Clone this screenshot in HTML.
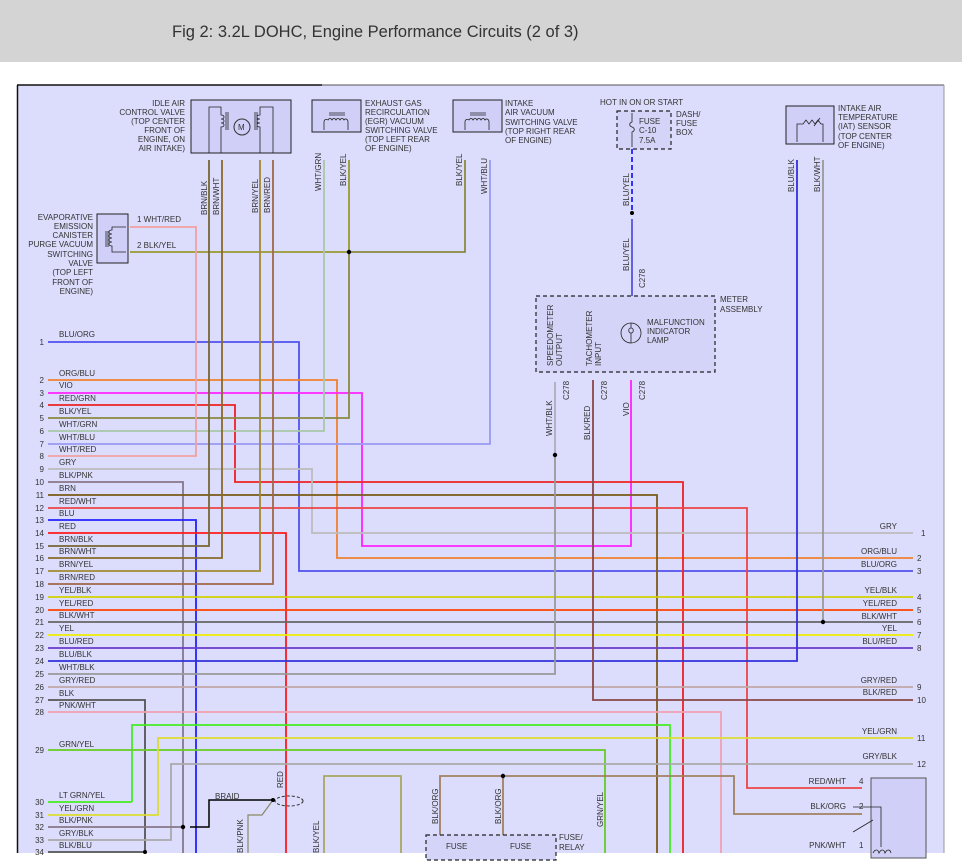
<!DOCTYPE html>
<html><head><meta charset="utf-8"><style>
html,body{margin:0;padding:0;width:962px;height:864px;overflow:hidden;background:#fff;font-family:"Liberation Sans",sans-serif}
#hdr{position:absolute;left:0;top:0;width:962px;height:62px;background:#d4d4d4}
#hdr span{position:absolute;left:172px;top:23px;font-size:16.5px;color:#333}
svg{position:absolute;left:0;top:0}
svg text{font-family:"Liberation Sans",sans-serif;font-size:8px;fill:#333}
</style></head><body>
<div id="hdr"><span>Fig 2: 3.2L DOHC, Engine Performance Circuits (2 of 3)</span></div>
<svg width="962" height="864" viewBox="0 0 962 864">
<rect x="17" y="85" width="927" height="768" fill="#dcdcfc"/>
<line x1="17" y1="85" x2="322" y2="85" stroke="#111" stroke-width="1.5"/>
<line x1="322" y1="85" x2="944" y2="85" stroke="#555" stroke-width="1"/>
<line x1="17.5" y1="85" x2="17.5" y2="853" stroke="#111" stroke-width="1.5"/>
<line x1="944" y1="85" x2="944" y2="853" stroke="#999" stroke-width="1"/>
<g fill="none" stroke-width="1.8">
<polyline points="48,342 299,342 299,571 913,571" stroke="#5050ee"/>
<polyline points="48,380 337,380 337,558 913,558" stroke="#f08030"/>
<polyline points="48,393 362,393 362,546 631,546 631,380" stroke="#ff22ff"/>
<polyline points="48,405 235,405 235,482 683,482 683,853" stroke="#ee2222"/>
<polyline points="48,418 349,418 349,252 465,252 465,160" stroke="#8a8a40"/>
<polyline points="130,252 349,252 349,160" stroke="#9a9a30"/>
<polyline points="48,431 324,431 324,160" stroke="#a8c8a8"/>
<polyline points="48,444 490,444 490,160" stroke="#9a9af0"/>
<polyline points="48,456 196,456 196,227 130,227" stroke="#f0a0a0"/>
<polyline points="48,469 312,469 312,533 913,533" stroke="#bcbcbc"/>
<polyline points="48,482 183,482 183,853" stroke="#887788"/>
<polyline points="48,495 657,495 657,853" stroke="#7a5a18"/>
<polyline points="48,508 747,508 747,788 862,788" stroke="#ee4444"/>
<polyline points="48,520 196,520 196,853" stroke="#2222ff"/>
<polyline points="48,533 286,533 286,853" stroke="#ff1a1a"/>
<polyline points="48,546 209,546 209,160" stroke="#776633"/>
<polyline points="48,558 222,558 222,160" stroke="#8a6a28"/>
<polyline points="48,571 260,571 260,160" stroke="#a08a30"/>
<polyline points="48,584 273,584 273,160" stroke="#a06848"/>
<polyline points="48,597 913,597" stroke="#d0d000"/>
<polyline points="48,610 913,610" stroke="#ff4400"/>
<polyline points="48,622 913,622" stroke="#666"/>
<polyline points="823,160 823,622" stroke="#999"/>
<polyline points="48,635 913,635" stroke="#eeee00"/>
<polyline points="48,648 913,648" stroke="#6a3acc"/>
<polyline points="48,661 797,661 797,160" stroke="#3030dd"/>
<polyline points="48,674 555,674 555,455" stroke="#999"/>
<polyline points="555,455 555,382" stroke="#888" stroke-width="1"/>
<polyline points="48,687 913,687" stroke="#c0a8a8"/>
<polyline points="48,700 145,700 145,853" stroke="#555"/>
<polyline points="593,380 593,700 913,700" stroke="#8a4848"/>
<polyline points="48,712 721,712 721,853" stroke="#f0a0b0"/>
<polyline points="132,802 132,725 670,725 670,853" stroke="#44ee22"/>
<polyline points="48,802 132,802" stroke="#44ee22"/>
<polyline points="48,750 605,750 605,853" stroke="#66cc22"/>
<polyline points="48,815 158,815 158,738 913,738" stroke="#dddd33"/>
<polyline points="48,840 171,840 171,764 913,764" stroke="#aaa"/>
<polyline points="48,827 183,827" stroke="#887788"/>
<polyline points="48,852 145,852" stroke="#555"/>
<polyline points="440,853 440,776 734,776 734,814 862,814" stroke="#a08060"/>
<polyline points="503,776 503,853" stroke="#a08060"/>
<polyline points="324,853 324,776 401,776 401,853" stroke="#a8a860"/>
<polyline points="632,219 632,296" stroke="#5555dd"/>
<polyline points="632,149 632,213" stroke="#2222ff" stroke-dasharray="5,3"/>
<polyline points="632,372 632,296" stroke="#333" stroke-width="1"/>
</g>
<polyline points="190,827 209,827 209,800 273,800" fill="none" stroke="#000" stroke-width="1.5"/>
<polyline points="248,853 248,815 262,815 273,800" fill="none" stroke="#886" stroke-width="1.2"/>
<ellipse cx="289" cy="801" rx="14" ry="5" fill="none" stroke="#333" stroke-dasharray="3,2"/>
<g fill="#000"><circle cx="349" cy="252" r="2.2"/><circle cx="555" cy="455" r="2.2"/><circle cx="632" cy="213" r="2"/><circle cx="823" cy="622" r="2.2"/><circle cx="183" cy="827" r="2.2"/><circle cx="273" cy="800" r="2"/><circle cx="503" cy="776" r="2.2"/><circle cx="145" cy="852" r="2"/></g>
<g stroke="#222" stroke-width="1" fill="#cfcff8">
<rect x="191" y="100" width="100" height="53"/>
<rect x="312" y="100" width="49" height="32"/>
<rect x="453" y="100" width="49" height="32"/>
<rect x="786" y="106" width="48" height="38"/>
<rect x="97" y="214" width="31" height="49"/>
<rect x="871" y="778" width="55" height="80" fill="#cfcff8" stroke="#555"/>
</g>
<g stroke="#222" stroke-width="1.2" fill="#d4d4f8" stroke-dasharray="4,3">
<rect x="617" y="111" width="54" height="38"/>
<rect x="536" y="296" width="179" height="76"/>
<rect x="426" y="835" width="130" height="25"/>
</g>
<g stroke="#222" stroke-width="0.8" fill="none">
<path d="M209,153 V137 M209,137 V107 H221 V115 c4,0 4,4 0,4 c4,0 4,4 0,4 c4,0 4,4 0,4 V153 M226,112 V130 M228,112 V130"/>
<path d="M273,153 V107 H260 V115 c-4,0 -4,4 0,4 c-4,0 -4,4 0,4 c-4,0 -4,4 0,4 V153 M255,112 V130 M257,112 V130"/>
<path d="M324,130 V122 c0,-3 3,-3 4,-2 c1,-2 3,-2 4,0 c1,-2 3,-2 4,0 c1,-2 3,-2 4,0 c1,-2 3,-2 4,0 c1,-2 4,-1 4,2 V130 M329,113 H345 M329,115 H345"/>
<path d="M465,130 V122 c0,-3 3,-3 4,-2 c1,-2 3,-2 4,0 c1,-2 3,-2 4,0 c1,-2 3,-2 4,0 c1,-2 3,-2 4,0 c1,-2 4,-1 4,2 V130 M470,113 H486 M470,115 H486"/>
<path d="M797,142 V124 h6 l3,-4 3,4 3,-4 3,4 3,-4 3,4 h2 V142 M814,126 l6,-8"/>
<path d="M126,227 H112 V230 c-4,0 -4,4 0,4 c-4,0 -4,4 0,4 c-4,0 -4,4 0,4 c-4,0 -4,4 0,4 V252 H126 M106,231 V247 M108,231 V247"/>
<path d="M632,113 V122 c-3,1 -3,4 0,5 c3,1 3,4 0,5 V147"/>
<circle cx="631" cy="333" r="10"/>
<path d="M631,323 V328 c-3,0 -3,5 0,5 c3,0 3,-5 0,-5 M631,333 V343"/>
<path d="M853,832 l20,-12 M853,807 h28 v40 M873,853 c2,-4 5,-4 6,0 c2,-4 5,-4 6,0 c2,-4 5,-4 6,0"/>
</g>
<circle cx="242" cy="127" r="8" fill="none" stroke="#333"/>
<text x="238" y="130" font-size="9">M</text>
<g text-anchor="end">
<text x="44" y="345">1</text><text x="44" y="383">2</text><text x="44" y="396">3</text><text x="44" y="408">4</text><text x="44" y="421">5</text><text x="44" y="434">6</text><text x="44" y="447">7</text><text x="44" y="459">8</text><text x="44" y="472">9</text><text x="44" y="485">10</text><text x="44" y="498">11</text><text x="44" y="511">12</text><text x="44" y="523">13</text><text x="44" y="536">14</text><text x="44" y="549">15</text><text x="44" y="561">16</text><text x="44" y="574">17</text><text x="44" y="587">18</text><text x="44" y="600">19</text><text x="44" y="613">20</text><text x="44" y="625">21</text><text x="44" y="638">22</text><text x="44" y="651">23</text><text x="44" y="664">24</text><text x="44" y="677">25</text><text x="44" y="690">26</text><text x="44" y="703">27</text><text x="44" y="715">28</text><text x="44" y="753">29</text><text x="44" y="805">30</text><text x="44" y="818">31</text><text x="44" y="830">32</text><text x="44" y="843">33</text><text x="44" y="855">34</text>
</g>
<g>
<text x="59" y="337">BLU/ORG</text><text x="59" y="376">ORG/BLU</text><text x="59" y="388">VIO</text><text x="59" y="401">RED/GRN</text><text x="59" y="414">BLK/YEL</text><text x="59" y="427">WHT/GRN</text><text x="59" y="440">WHT/BLU</text><text x="59" y="452">WHT/RED</text><text x="59" y="465">GRY</text><text x="59" y="478">BLK/PNK</text><text x="59" y="491">BRN</text><text x="59" y="504">RED/WHT</text><text x="59" y="516">BLU</text><text x="59" y="529">RED</text><text x="59" y="542">BRN/BLK</text><text x="59" y="554">BRN/WHT</text><text x="59" y="567">BRN/YEL</text><text x="59" y="580">BRN/RED</text><text x="59" y="593">YEL/BLK</text><text x="59" y="606">YEL/RED</text><text x="59" y="618">BLK/WHT</text><text x="59" y="631">YEL</text><text x="59" y="644">BLU/RED</text><text x="59" y="657">BLU/BLK</text><text x="59" y="670">WHT/BLK</text><text x="59" y="683">GRY/RED</text><text x="59" y="696">BLK</text><text x="59" y="708">PNK/WHT</text><text x="59" y="747">GRN/YEL</text><text x="59" y="798">LT GRN/YEL</text><text x="59" y="811">YEL/GRN</text><text x="59" y="823">BLK/PNK</text><text x="59" y="836">GRY/BLK</text><text x="59" y="848">BLK/BLU</text>
<text x="215" y="799">BRAID</text><text x="446" y="849">FUSE</text><text x="510" y="849">FUSE</text><text x="559" y="840">FUSE/</text><text x="559" y="850">RELAY</text>
</g>
<g text-anchor="end">
<text x="897" y="529">GRY</text><text x="897" y="554">ORG/BLU</text><text x="897" y="567">BLU/ORG</text><text x="897" y="593">YEL/BLK</text><text x="897" y="606">YEL/RED</text><text x="897" y="619">BLK/WHT</text><text x="897" y="631">YEL</text><text x="897" y="644">BLU/RED</text><text x="897" y="683">GRY/RED</text><text x="897" y="695">BLK/RED</text><text x="897" y="734">YEL/GRN</text><text x="897" y="759">GRY/BLK</text>
<text x="846" y="784">RED/WHT</text><text x="846" y="809">BLK/ORG</text><text x="846" y="848">PNK/WHT</text>
<text x="185" y="106">IDLE AIR</text><text x="185" y="115">CONTROL VALVE</text><text x="185" y="124">(TOP CENTER</text><text x="185" y="133">FRONT OF</text><text x="185" y="142">ENGINE, ON</text><text x="185" y="151">AIR INTAKE)</text>
<text x="93" y="220">EVAPORATIVE</text><text x="93" y="229">EMISSION</text><text x="93" y="238">CANISTER</text><text x="93" y="247">PURGE VACUUM</text><text x="93" y="257">SWITCHING</text><text x="93" y="266">VALVE</text><text x="93" y="275">(TOP LEFT</text><text x="93" y="285">FRONT OF</text><text x="93" y="294">ENGINE)</text>
</g>
<g>
<text x="921" y="536">1</text><text x="917" y="561">2</text><text x="917" y="574">3</text><text x="917" y="600">4</text><text x="917" y="613">5</text><text x="917" y="625">6</text><text x="917" y="638">7</text><text x="917" y="651">8</text><text x="917" y="690">9</text><text x="917" y="703">10</text><text x="917" y="741">11</text><text x="917" y="767">12</text>
<text x="859" y="784">4</text><text x="859" y="809">2</text><text x="859" y="848">1</text>
<text x="365" y="106">EXHAUST GAS</text><text x="365" y="115">RECIRCULATION</text><text x="365" y="124">(EGR) VACUUM</text><text x="365" y="133">SWITCHING VALVE</text><text x="365" y="142">(TOP LEFT REAR</text><text x="365" y="151">OF ENGINE)</text>
<text x="505" y="106">INTAKE</text><text x="505" y="115">AIR VACUUM</text><text x="505" y="125">SWITCHING VALVE</text><text x="505" y="134">(TOP RIGHT REAR</text><text x="505" y="143">OF ENGINE)</text>
<text x="600" y="105">HOT IN ON OR START</text><text x="639" y="124">FUSE</text><text x="639" y="133">C-10</text><text x="639" y="143">7.5A</text><text x="676" y="117">DASH/</text><text x="676" y="126">FUSE</text><text x="676" y="135">BOX</text>
<text x="838" y="111">INTAKE AIR</text><text x="838" y="120">TEMPERATURE</text><text x="838" y="129">(IAT) SENSOR</text><text x="838" y="139">(TOP CENTER</text><text x="838" y="148">OF ENGINE)</text>
<text x="720" y="302">METER</text><text x="720" y="312">ASSEMBLY</text>
<text x="647" y="325">MALFUNCTION</text><text x="647" y="334">INDICATOR</text><text x="647" y="343">LAMP</text>
<text x="137" y="222">1  WHT/RED</text><text x="137" y="248">2  BLK/YEL</text>
</g>
<g>
<text transform="translate(207,215) rotate(-90)">BRN/BLK</text>
<text transform="translate(219,215) rotate(-90)">BRN/WHT</text>
<text transform="translate(258,213) rotate(-90)">BRN/YEL</text>
<text transform="translate(270,213) rotate(-90)">BRN/RED</text>
<text transform="translate(321,191) rotate(-90)">WHT/GRN</text>
<text transform="translate(346,186) rotate(-90)">BLK/YEL</text>
<text transform="translate(462,186) rotate(-90)">BLK/YEL</text>
<text transform="translate(487,194) rotate(-90)">WHT/BLU</text>
<text transform="translate(629,206) rotate(-90)">BLU/YEL</text>
<text transform="translate(629,271) rotate(-90)">BLU/YEL</text>
<text transform="translate(645,288) rotate(-90)">C278</text>
<text transform="translate(794,192) rotate(-90)">BLU/BLK</text>
<text transform="translate(820,192) rotate(-90)">BLK/WHT</text>
<text transform="translate(553,366) rotate(-90)">SPEEDOMETER</text><text transform="translate(562,366) rotate(-90)">OUTPUT</text>
<text transform="translate(592,366) rotate(-90)">TACHOMETER</text><text transform="translate(601,366) rotate(-90)">INPUT</text>
<text transform="translate(552,436) rotate(-90)">WHT/BLK</text>
<text transform="translate(590,440) rotate(-90)">BLK/RED</text>
<text transform="translate(629,416) rotate(-90)">VIO</text>
<text transform="translate(569,400) rotate(-90)">C278</text><text transform="translate(607,400) rotate(-90)">C278</text><text transform="translate(645,400) rotate(-90)">C278</text>
<text transform="translate(283,788) rotate(-90)">RED</text>
<text transform="translate(438,824) rotate(-90)">BLK/ORG</text>
<text transform="translate(501,824) rotate(-90)">BLK/ORG</text>
<text transform="translate(603,827) rotate(-90)">GRN/YEL</text>
<text transform="translate(319,853) rotate(-90)">BLK/YEL</text>
<text transform="translate(243,853) rotate(-90)">BLK/PNK</text>
</g>
</svg>
</body></html>
